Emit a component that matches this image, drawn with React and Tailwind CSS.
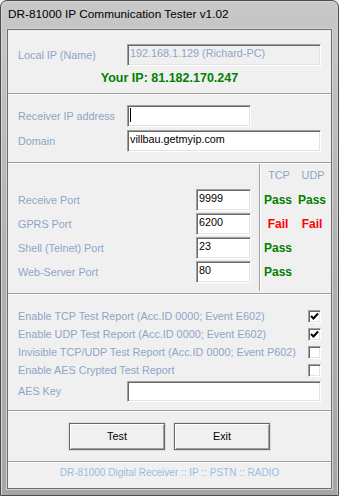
import React from 'react';

// Classic Win32 dialog: "DR-81000 IP Communication Tester"

const labelClass = "text-[#8fa5c6] text-[10.8px] leading-[13px] whitespace-nowrap";
const sunken = "border border-[#a0a0a0] border-b-white border-r-white shadow-[inset_1px_1px_0_#696969,inset_-1px_-1px_0_#e3e3e3]";

function Divider() {
  return (
    <div>
      <div className="h-px bg-[#a0a0a0]" />
      <div className="h-px bg-white" />
    </div>
  );
}

function TextBox({ value = '', width, height = 22, disabled = false, caret = false }) {
  return (
    <div
      className={`${sunken} flex items-center pl-[2px] pb-[3px] text-[10.8px] leading-[13px] whitespace-nowrap overflow-hidden ${disabled ? 'bg-[#f0f0f0] text-[#8fa5c6]' : 'bg-white text-black'} ${width} ${height === 21 ? 'h-[21px]' : 'h-[22px]'}`}
    >
      {caret && <span className="block w-px h-[14px] bg-black" />}
      {value}
    </div>
  );
}

function CheckBox({ checked }) {
  return (
    <div className={`w-[13px] h-[13px] bg-white ${sunken} flex items-center justify-center`}>
      {checked && (
        <svg width="9" height="9" viewBox="0 0 9 9">
          <path d="M1 4 L3.5 6.5 L8 1.5" fill="none" stroke="#000" strokeWidth="2" />
        </svg>
      )}
    </div>
  );
}

function Button({ children }) {
  return (
    <button
      type="button"
      className="w-[96px] h-[27px] bg-[#f0f0f0] border border-[#6a6a6a] shadow-[inset_1px_1px_0_#fff,inset_-1px_-1px_0_#a0a0a0,0_0_0_1px_#dcdcdc] text-[10.8px] text-black"
    >
      {children}
    </button>
  );
}

const ports = [
  { name: 'Receive Port', value: '9999', tcp: 'Pass', udp: 'Pass' },
  { name: 'GPRS Port', value: '6200', tcp: 'Fail', udp: 'Fail' },
  { name: 'Shell (Telnet) Port', value: '23', tcp: 'Pass', udp: '' },
  { name: 'Web-Server Port', value: '80', tcp: 'Pass', udp: '' },
];

const reports = [
  { text: 'Enable TCP Test Report (Acc.ID 0000; Event E602)', checked: true },
  { text: 'Enable UDP Test Report (Acc.ID 0000; Event E602)', checked: true },
  { text: 'Invisible TCP/UDP Test Report (Acc.ID 0000; Event P602)', checked: false },
  { text: 'Enable AES Crypted Test Report', checked: false },
];

function Result({ value }) {
  if (!value) return <span />;
  return (
    <span className={`text-center font-bold text-[12px] leading-[22px] ${value === 'Pass' ? 'text-[#008000]' : 'text-[#ff0000]'}`}>
      {value}
    </span>
  );
}

export default function App() {
  return (
    <div className="w-[339px] h-[496px] bg-[#efefef] font-['Liberation_Sans',Arial,sans-serif]">
      {/* Window frame */}
      <div className="w-[339px] h-[496px] flex flex-col border border-[#4a4a4a] rounded-t-[7px] bg-gradient-to-b from-[#c8c8c8] via-[#b2b2b2] to-[#a6a6a6] shadow-[inset_1px_1px_0_#d8d8d8,inset_-1px_0_0_#d0d0d0]">
        {/* Title bar */}
        <div className="h-[28px] flex items-center pl-[7px] text-[11.8px] text-black">
          DR-81000 IP Communication Tester v1.02
        </div>

        {/* Client area */}
        <div className="mx-[6px] h-[460px] flex flex-col bg-[#f0f0f0] border border-[#6d6d6d] shadow-[0_0_0_1px_#d4d4d4]">
          {/* Local IP */}
          <div className="h-[63px] flex flex-col pt-[14px]">
            <div className="flex items-center pl-[10px] h-[22px]">
              <span className={`${labelClass} w-[109px]`}>Local IP (Name)</span>
              <TextBox value="192.168.1.129 (Richard-PC)" width="w-[194px]" disabled />
            </div>
            <div className="mt-[5px] text-center font-bold text-[12.5px] leading-[14px] text-[#008000]">
              Your IP: 81.182.170.247
            </div>
          </div>
          <Divider />

          {/* Receiver */}
          <div className="h-[67px] flex flex-col gap-[3px] pt-[10px] pl-[10px]">
            <div className="flex items-center h-[22px]">
              <span className={`${labelClass} w-[109px]`}>Receiver IP address</span>
              <TextBox width="w-[124px]" caret />
            </div>
            <div className="flex items-center h-[22px]">
              <span className={`${labelClass} w-[109px]`}>Domain</span>
              <TextBox value="villbau.getmyip.com" width="w-[194px]" />
            </div>
          </div>
          <Divider />

          {/* Ports */}
          <div className="h-[129px] flex">
            <div className="w-[251px] flex flex-col gap-[2px] pt-[25px] pl-[10px] pr-[8px]">
              {ports.map((p) => (
                <div key={p.name} className="flex items-center justify-between h-[22px]">
                  <span className={labelClass}>{p.name}</span>
                  <TextBox value={p.value} width="w-[55px]" />
                </div>
              ))}
            </div>
            <div className="w-[2px] mb-[2px] flex">
              <div className="w-px bg-[#a0a0a0]" />
              <div className="w-px bg-white" />
            </div>
            <div className="flex flex-col pt-[4px]">
              <div className="grid grid-cols-[34px_34px] h-[14px] text-[#8fa5c6] text-[10.8px] leading-[14px] text-center">
                <span className="pl-[2px]">TCP</span>
                <span className="pl-[2px]">UDP</span>
              </div>
              <div className="mt-[7px] grid grid-cols-[34px_34px] auto-rows-[22px] gap-y-[2px]">
                {ports.map((p) => (
                  <React.Fragment key={p.name}>
                    <Result value={p.tcp} />
                    <Result value={p.udp} />
                  </React.Fragment>
                ))}
              </div>
            </div>
          </div>
          <Divider />

          {/* Test reports */}
          <div className="h-[115px] flex flex-col pt-[12px] pl-[10px] pr-[10px]">
            {reports.map((r) => (
              <div key={r.text} className="flex items-center justify-between h-[18px]">
                <span className={labelClass}>{r.text}</span>
                <CheckBox checked={r.checked} />
              </div>
            ))}
            <div className="mt-[2px] flex items-center h-[21px]">
              <span className={`${labelClass} w-[109px]`}>AES Key</span>
              <TextBox width="w-[194px]" height={21} />
            </div>
          </div>
          <Divider />

          {/* Buttons */}
          <div className="h-[49px] flex justify-center items-start gap-[9px] pt-[11px]">
            <Button>Test</Button>
            <Button>Exit</Button>
          </div>
          <Divider />

          {/* Footer */}
          <div className="h-[25px] pt-[4px] text-center text-[10px] leading-[12px] text-[#98bde2]">
            DR-81000 Digital Receiver :: IP :: PSTN :: RADIO
          </div>
        </div>
      </div>
    </div>
  );
}
